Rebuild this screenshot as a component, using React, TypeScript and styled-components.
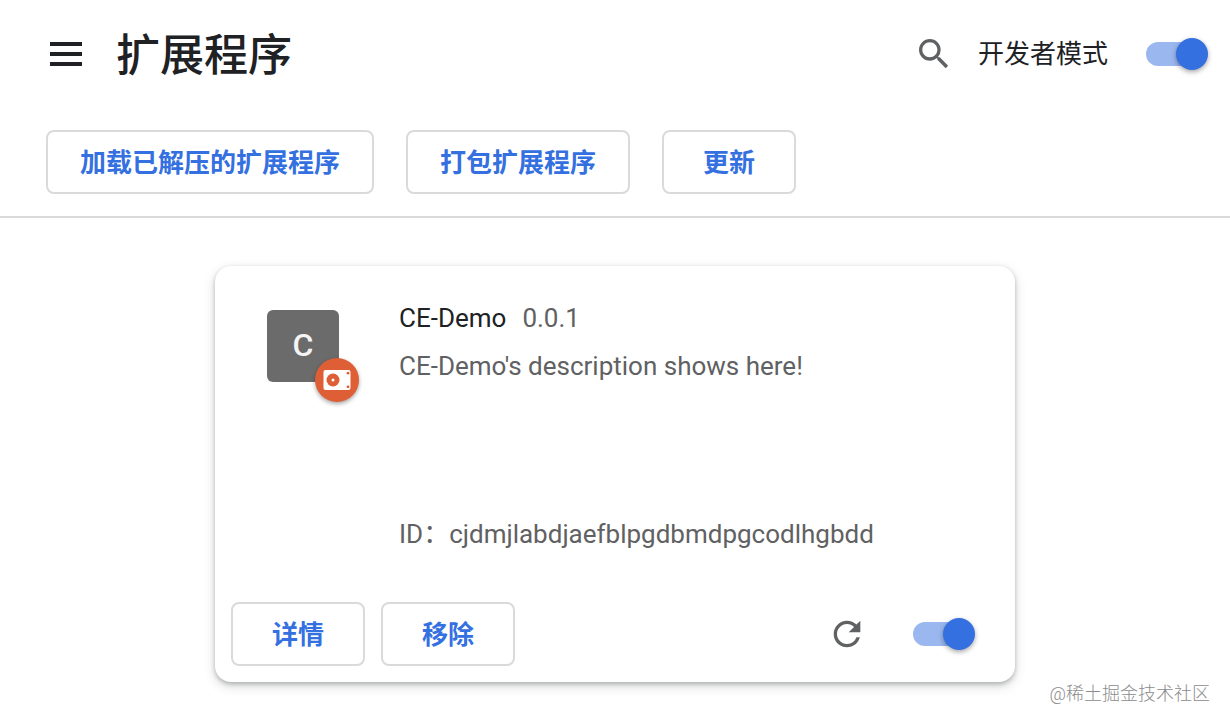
import React, { useState } from "react";
import styled, { createGlobalStyle } from "styled-components";

const GlobalStyle = createGlobalStyle`
  * {
    box-sizing: border-box;
  }
  body {
    margin: 0;
    background: #fff;
    color: #202124;
    font-family: Roboto, "Noto Sans CJK SC", sans-serif;
    font-size: 26px;
    line-height: 32px;
  }
`;

const Header = styled.header`
  display: flex;
  align-items: center;
  height: 108px;
  padding: 0 22px 0 50px;
`;

const IconButton = styled.button`
  display: flex;
  flex: none;
  padding: 0;
  border: 0;
  background: none;
  color: ${(p) => p.color ?? "#5f6163"};
  cursor: pointer;
`;

const Title = styled.h1`
  flex: 1;
  margin: 0 0 0 34px;
  padding-top: 4px;
  font-size: 44px;
  line-height: 64px;
  font-weight: 500;
`;

const ModeLabel = styled.label`
  display: flex;
  align-items: center;
  gap: 38px;
  margin-left: 24px;
`;

const Toggle = styled.input`
  appearance: none;
  display: flex;
  flex: none;
  align-items: center;
  width: 62px;
  height: 32px;
  margin: 0;
  cursor: pointer;

  &::before {
    content: "";
    width: 56px;
    height: 24px;
    border-radius: 12px;
    background: ${(p) => (p.checked ? "#9bb7ef" : "#bdc1c6")};
  }

  &::after {
    content: "";
    flex: none;
    width: 32px;
    height: 32px;
    margin-left: ${(p) => (p.checked ? "-26px" : "-56px")};
    border-radius: 50%;
    background: ${(p) => (p.checked ? "#3470df" : "#fff")};
    box-shadow: 0 2px 5px rgba(0, 0, 0, 0.35);
  }
`;

const Toolbar = styled.div`
  display: flex;
  flex-wrap: wrap;
  gap: 32px;
  padding: 22px 46px;
  border-bottom: 2px solid #dadadc;
`;

const OutlineButton = styled.button`
  min-width: 134px;
  height: 64px;
  padding: 2px 32px 0;
  border: 2px solid #dadadc;
  border-radius: 8px;
  background: #fff;
  color: #3470df;
  font: inherit;
  font-weight: 700;
  cursor: pointer;
`;

const Main = styled.main`
  display: flex;
  justify-content: center;
  padding: 48px 16px 0;
`;

const Card = styled.article`
  display: flex;
  flex-direction: column;
  width: 100%;
  max-width: 800px;
  min-height: 416px;
  border-radius: 16px;
  background: #fff;
  box-shadow: 0 2px 4px rgba(60, 64, 67, 0.3), 0 4px 12px rgba(60, 64, 67, 0.2);
`;

const CardBody = styled.div`
  display: flex;
  flex: 1;
  gap: 60px;
  padding: 36px 52px 0;
`;

const AppIcon = styled.div`
  position: relative;
  width: 72px;
  height: 72px;
  margin-top: 8px;
  border-radius: 6px;
  background: #6b6b6b;
  color: #f4f4f4;
  font-size: 32px;
  line-height: 70px;
  font-weight: 500;
  text-align: center;
`;

const SourceBadge = styled.span`
  position: absolute;
  right: -20px;
  bottom: -20px;
  display: flex;
  width: 44px;
  height: 44px;
  border-radius: 50%;
  background: #de5f35;
  box-shadow: 0 2px 4px rgba(0, 0, 0, 0.35);
`;

const Details = styled.div`
  display: flex;
  flex-direction: column;
  gap: 16px;
  color: #5f6163;
`;

const NameRow = styled.div`
  display: flex;
  gap: 16px;
`;

const Name = styled.h2`
  margin: 0;
  color: #202124;
  font-size: 26px;
  font-weight: 400;
`;

const Text = styled.p`
  margin: 0;
`;

const ExtensionId = styled(Text)`
  margin-top: auto;
  margin-bottom: 52px;
`;

const CardActions = styled.div`
  display: flex;
  align-items: center;
  gap: 16px;
  padding: 0 40px 16px 16px;
`;

const ActionsEnd = styled.div`
  display: flex;
  align-items: center;
  gap: 46px;
  margin-left: auto;
`;

const Watermark = styled.footer`
  padding: 0 20px;
  color: #8c8c8c;
  font-size: 18px;
  line-height: 24px;
  font-weight: 300;
  text-align: right;
`;

const MenuIcon = () => (
  <svg width="32" height="24" viewBox="0 0 32 24" fill="currentColor" aria-hidden="true">
    <path d="M0 0h32v4H0zM0 10h32v4H0zM0 20h32v4H0z" />
  </svg>
);

const SearchIcon = () => (
  <svg width="40" height="40" viewBox="0 0 24 24" fill="currentColor" aria-hidden="true">
    <path d="M15.5 14h-.79l-.28-.27A6.471 6.471 0 0 0 16 9.5 6.5 6.5 0 1 0 9.5 16c1.61 0 3.09-.59 4.23-1.57l.27.28v.79l5 4.99L20.49 19l-4.99-5zm-6 0C7.01 14 5 11.99 5 9.5S7.01 5 9.5 5 14 7.01 14 9.5 11.99 14 9.5 14z" />
  </svg>
);

const ReloadIcon = () => (
  <svg width="40" height="40" viewBox="0 0 24 24" fill="currentColor" aria-hidden="true">
    <path d="M17.65 6.35A7.958 7.958 0 0 0 12 4c-4.42 0-7.99 3.58-7.99 8s3.57 8 7.99 8c3.73 0 6.84-2.55 7.73-6h-2.08A5.99 5.99 0 0 1 12 18c-3.31 0-6-2.69-6-6s2.69-6 6-6c1.66 0 3.14.69 4.22 1.78L13 11h7V4l-2.35 2.35z" />
  </svg>
);

const DriveIcon = () => (
  <svg width="44" height="44" viewBox="0 0 44 44" aria-hidden="true">
    <rect x="8.5" y="12" width="27" height="20" rx="2" fill="#fff" />
    <g fill="#de5f35">
      <circle cx="18" cy="22" r="6.5" />
      <circle cx="33" cy="15.2" r="1.4" />
      <circle cx="33" cy="28.8" r="1.4" />
    </g>
    <circle cx="18" cy="22" r="1.5" fill="#fff" />
  </svg>
);

export default function App() {
  const [devMode, setDevMode] = useState(true);
  const [enabled, setEnabled] = useState(true);

  return (
    <>
      <GlobalStyle />
      <Header>
        <IconButton color="#202124" aria-label="主菜单">
          <MenuIcon />
        </IconButton>
        <Title>扩展程序</Title>
        <IconButton aria-label="搜索">
          <SearchIcon />
        </IconButton>
        <ModeLabel>
          开发者模式
          <Toggle
            type="checkbox"
            checked={devMode}
            onChange={(e) => setDevMode(e.target.checked)}
          />
        </ModeLabel>
      </Header>
      <Toolbar>
        <OutlineButton>加载已解压的扩展程序</OutlineButton>
        <OutlineButton>打包扩展程序</OutlineButton>
        <OutlineButton>更新</OutlineButton>
      </Toolbar>
      <Main>
        <Card>
          <CardBody>
            <AppIcon>
              C
              <SourceBadge>
                <DriveIcon />
              </SourceBadge>
            </AppIcon>
            <Details>
              <NameRow>
                <Name>CE-Demo</Name>
                <span>0.0.1</span>
              </NameRow>
              <Text>CE-Demo's description shows here!</Text>
              <ExtensionId>ID：cjdmjlabdjaefblpgdbmdpgcodlhgbdd</ExtensionId>
            </Details>
          </CardBody>
          <CardActions>
            <OutlineButton>详情</OutlineButton>
            <OutlineButton>移除</OutlineButton>
            <ActionsEnd>
              <IconButton aria-label="重新加载">
                <ReloadIcon />
              </IconButton>
              <Toggle
                type="checkbox"
                aria-label="启用 CE-Demo"
                checked={enabled}
                onChange={(e) => setEnabled(e.target.checked)}
              />
            </ActionsEnd>
          </CardActions>
        </Card>
      </Main>
      <Watermark>@稀土掘金技术社区</Watermark>
    </>
  );
}
